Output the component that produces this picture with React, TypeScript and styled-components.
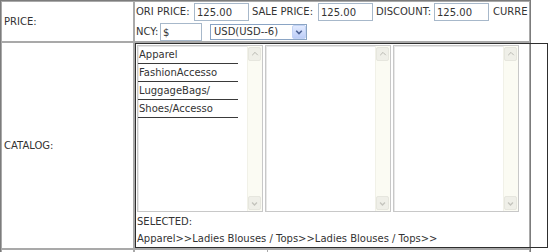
import React from 'react';
import styled, { createGlobalStyle } from 'styled-components';

const GlobalStyle = createGlobalStyle`
  html, body { margin: 0; padding: 0; background: #fff; }
  body {
    font-family: "DejaVu Sans", Verdana, sans-serif;
    font-size: 10px;
    color: #333;
  }
`;

const FormTable = styled.table`
  border-collapse: separate;
  border-spacing: 0;
  border: 1px solid #7c7c7c;
  table-layout: fixed;
  width: 531px;
  font-size: 10px;
  color: #333;
`;

const LabelCell = styled.td`
  box-sizing: border-box;
  width: 133px;
  border: 1px solid #a9a9a9;
  padding: 0 0 0 2px;
  vertical-align: middle;
  white-space: nowrap;
`;

const ValueCell = styled.td`
  border: 1px solid #a9a9a9;
  padding: 0;
  vertical-align: top;
`;

const PriceBlock = styled.div`
  padding-left: 1px;
  display: flex;
  flex-direction: column;
`;

const Line = styled.div<{ $h: number }>`
  display: flex;
  align-items: center;
  height: ${(p) => p.$h}px;
  white-space: nowrap;
`;

const FieldLabel = styled.span<{ $w?: number; $pl?: number }>`
  flex: none;
  box-sizing: border-box;
  ${(p) => (p.$w ? `width: ${p.$w}px;` : '')}
  padding-left: ${(p) => p.$pl ?? 0}px;
  line-height: 12px;
`;

const TextInput = styled.input<{ $w: number }>`
  flex: none;
  box-sizing: border-box;
  width: ${(p) => p.$w}px;
  height: 18px;
  margin: 0;
  padding: 1px 0 0 2px;
  border: 1px solid #a7b8ca;
  font-family: "DejaVu Sans", Verdana, sans-serif;
  font-size: 10px;
  color: #333;
  background: #fff;
  outline: none;
`;

const SelectBox = styled.div`
  flex: none;
  box-sizing: border-box;
  display: flex;
  align-items: center;
  width: 97px;
  height: 16px;
  margin-left: 8px;
  border: 1px solid #8aa4c4;
  background: #fff;
`;

const SelectValue = styled.span`
  flex: 1;
  padding-left: 3px;
  line-height: 14px;
  overflow: hidden;
`;

const SelectButton = styled.span`
  flex: none;
  display: flex;
  align-items: center;
  justify-content: center;
  width: 14px;
  height: 14px;
  box-sizing: border-box;
  border: 1px solid #c3d3f5;
  border-radius: 2px;
  background: linear-gradient(#e2ebff, #bccdf7);
`;

const CatalogBox = styled.div`
  box-sizing: border-box;
  width: 413px;
  border: 1px solid #2e2e2e;
  padding: 0 0 0 1px;
`;

const ListRow = styled.div`
  display: flex;
  gap: 2px;
  margin: 1px 0 1px;
`;

const ListBox = styled.div`
  box-sizing: border-box;
  display: flex;
  width: 126px;
  height: 167px;
  border: 1px solid #c8c8c8;
  box-shadow: inset 1px 1px 0 #e8e8e8;
  background: #fff;
`;

const Items = styled.div`
  flex: 1;
  overflow: hidden;
`;

const ListItem = styled.div`
  box-sizing: border-box;
  width: 100px;
  height: 18px;
  line-height: 17px;
  padding-left: 1px;
  border-bottom: 1px solid #3a3a3a;
  white-space: nowrap;
  overflow: hidden;
`;

const ScrollBar = styled.div`
  flex: none;
  width: 14px;
  display: flex;
  flex-direction: column;
  justify-content: space-between;
  background: #fbfbf3;
  border-left: 1px solid #f1f1e8;
`;

const ScrollButton = styled.div`
  box-sizing: border-box;
  display: flex;
  align-items: center;
  justify-content: center;
  width: 13px;
  height: 14px;
  margin: 1px 0;
  border: 1px solid #e6e6de;
  border-radius: 2px;
  background: #efefe8;
`;

const TextLine = styled.div`
  line-height: 17px;
  white-space: nowrap;
`;

const SubRow = styled.div`
  display: flex;
  height: 20px;
`;

const SubCell = styled.div<{ $w: number }>`
  width: ${(p) => p.$w}px;
  border-right: 1px solid #a9a9a9;
`;

const Chevron = ({ up, color, size }: { up: boolean; color: string; size: number }) => (
  <svg width={size} height={size} viewBox="0 0 8 8">
    <path
      d={up ? 'M1.2 5.2 L4 2.4 L6.8 5.2' : 'M1.2 2.8 L4 5.6 L6.8 2.8'}
      fill="none"
      stroke={color}
      strokeWidth={up ? 1 : 1.6}
    />
  </svg>
);

const CatalogList = ({ items }: { items: string[] }) => (
  <ListBox>
    <Items>
      {items.map((it) => (
        <ListItem key={it}>{it}</ListItem>
      ))}
    </Items>
    <ScrollBar>
      <ScrollButton>
        <Chevron up color="#b9b9b2" size={8} />
      </ScrollButton>
      <ScrollButton>
        <Chevron up={false} color="#c4c4bd" size={7} />
      </ScrollButton>
    </ScrollBar>
  </ListBox>
);

export default function App() {
  return (
    <>
      <GlobalStyle />
      <FormTable>
        <tbody>
          <tr>
            <LabelCell>PRICE:</LabelCell>
            <ValueCell>
              <PriceBlock>
                <Line $h={20}>
                  <FieldLabel $w={58}>ORI PRICE:</FieldLabel>
                  <TextInput $w={55} defaultValue="125.00" />
                  <FieldLabel $w={69} $pl={3}>SALE PRICE:</FieldLabel>
                  <TextInput $w={55} defaultValue="125.00" />
                  <FieldLabel $w={61} $pl={3}>DISCOUNT:</FieldLabel>
                  <TextInput $w={55} defaultValue="125.00" />
                  <FieldLabel $pl={4}>CURRE</FieldLabel>
                </Line>
                <Line $h={19}>
                  <FieldLabel $w={24}>NCY:</FieldLabel>
                  <TextInput $w={42} defaultValue="$" />
                  <SelectBox>
                    <SelectValue>USD(USD--6)</SelectValue>
                    <SelectButton>
                      <Chevron up={false} color="#4d6396" size={8} />
                    </SelectButton>
                  </SelectBox>
                </Line>
              </PriceBlock>
            </ValueCell>
          </tr>
          <tr>
            <LabelCell>CATALOG:</LabelCell>
            <ValueCell>
              <CatalogBox>
                <ListRow>
                  <CatalogList items={['Apparel', 'FashionAccesso', 'LuggageBags/', 'Shoes/Accesso']} />
                  <CatalogList items={[]} />
                  <CatalogList items={[]} />
                </ListRow>
                <TextLine>SELECTED:</TextLine>
                <TextLine>Apparel&gt;&gt;Ladies Blouses / Tops&gt;&gt;Ladies Blouses / Tops&gt;&gt;</TextLine>
              </CatalogBox>
            </ValueCell>
          </tr>
          <tr>
            <LabelCell />
            <ValueCell>
              <SubRow>
                <SubCell $w={132} />
              </SubRow>
            </ValueCell>
          </tr>
        </tbody>
      </FormTable>
    </>
  );
}
